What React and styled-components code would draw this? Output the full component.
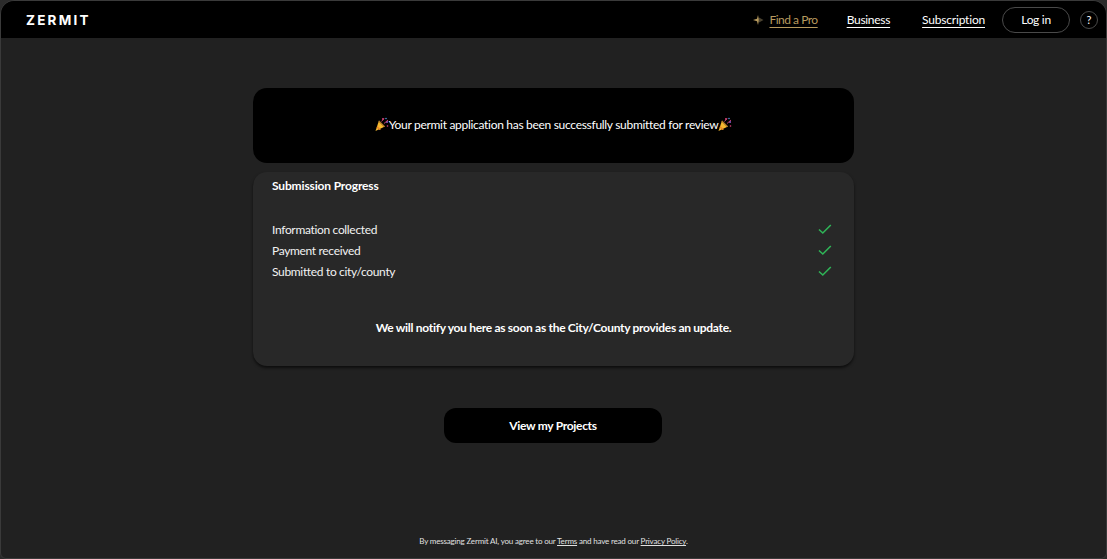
import React from 'react';
import styled, { createGlobalStyle } from 'styled-components';

const GlobalStyle = createGlobalStyle`
  html, body {
    margin: 0;
    padding: 0;
    height: 100%;
    background: #2b2b2b;
  }
  * { box-sizing: border-box; }
`;

const Page = styled.div`
  height: 559px;
  display: flex;
  flex-direction: column;
  overflow: hidden;
  background: #212121;
  border: 1px solid #3a3a3a;
  border-radius: 14px 14px 6px 6px;
  font-family: 'Lato', sans-serif;
  font-size: 12px;
  letter-spacing: -0.3px;
  color: #fff;
`;

const Header = styled.header`
  height: 37px;
  flex: none;
  display: flex;
  align-items: center;
  background: #000;
  padding: 0 8px 0 25px;
`;

const Logo = styled.div`
  font-family: 'Inter', sans-serif;
  font-weight: 700;
  font-size: 13.5px;
  letter-spacing: 2.2px;
  margin-right: auto;
`;

const ProLink = styled.a`
  display: flex;
  align-items: center;
  gap: 5px;
  margin-right: 29px;
  color: #b79a5e;
  letter-spacing: -0.5px;
  span { text-decoration: underline; text-underline-offset: 3px; }
`;

const NavLink = styled.a`
  color: #fff;
  text-decoration: underline;
  text-underline-offset: 3px;
  letter-spacing: ${(p) => p.$spacing}px;
  margin-right: ${(p) => p.$gap}px;
`;

const LoginButton = styled.button`
  width: 68px;
  height: 26px;
  border: 1px solid #4a4a4a;
  border-radius: 13px;
  background: transparent;
  color: #fff;
  font: 12px 'Lato', sans-serif;
  letter-spacing: inherit;
  padding: 0;
  margin-right: 10px;
`;

const HelpButton = styled.button`
  width: 18px;
  height: 18px;
  border: 1px solid #4a4a4a;
  border-radius: 50%;
  background: transparent;
  color: #fff;
  font: 11px 'Lato', sans-serif;
  padding: 0;
`;

const Main = styled.main`
  width: 601px;
  margin: 50px 0 0 252px;
  display: flex;
  flex-direction: column;
`;

const Banner = styled.div`
  height: 75px;
  background: #000;
  border-radius: 14px;
  display: flex;
  align-items: center;
  justify-content: center;
  padding-bottom: 3px;
  color: #fff;
`;

const ProgressCard = styled.section`
  height: 194px;
  margin-top: 9px;
  background: #282828;
  border-radius: 14px;
  box-shadow: 0 2px 3px rgba(0, 0, 0, 0.6);
  padding: 6px 19px 0;
  display: flex;
  flex-direction: column;
`;

const CardTitle = styled.h2`
  margin: 0 0 25px;
  font-size: 12px;
  line-height: 16px;
  font-weight: 700;
  letter-spacing: -0.15px;
`;

const StepRow = styled.div`
  height: 21px;
  display: flex;
  align-items: center;
  justify-content: space-between;
  padding-right: 3px;
  color: #f2f2f2;
  letter-spacing: -0.33px;
`;

const Notice = styled.p`
  margin: 38px 0 0;
  text-align: center;
  font-weight: 700;
`;

const ProjectsButton = styled.button`
  align-self: center;
  width: 218px;
  height: 35px;
  margin: 42px 1px 0 0;
  background: #000;
  border: none;
  border-radius: 12px;
  color: #fff;
  font: 700 12px 'Lato', sans-serif;
  letter-spacing: inherit;
  padding: 0 0 1px;
`;

const Footer = styled.footer`
  margin-top: auto;
  padding-bottom: 12px;
  text-align: center;
  font-size: 8px;
  letter-spacing: -0.18px;
  color: #e0e0e0;
  a { color: inherit; text-decoration: underline; }
`;

const Popper = () => (
  <svg width="14" height="15" viewBox="0 0 14 15">
    <path d="M0.5 14 L4 3.5 L10 9.5 Z" fill="#f5b82e" />
    <path d="M2.2 9 L6 12.4 L4.4 13 L1.6 10.6 Z" fill="#e8862a" />
    <path d="M4 3.5 L10 9.5 L8.8 10 L3.6 4.8 Z" fill="#a8702a" />
    <circle cx="8" cy="2" r="1" fill="#e0457b" />
    <circle cx="12" cy="5" r="1" fill="#8e5bd0" />
    <path d="M6.5 4.5 L9 1.5 M9 6.5 L13 3" stroke="#c2406e" strokeWidth="1" fill="none" />
    <circle cx="11" cy="1.5" r="0.8" fill="#4a90d9" />
    <circle cx="12.5" cy="9" r="0.8" fill="#e0457b" />
  </svg>
);

const Spark = () => (
  <svg width="11" height="12" viewBox="0 0 11 12">
    <path d="M5 1 L5.8 5 L5.8 7 L5 11 L4 7.2 L0 6 L4 4.8 Z" fill="#b79a5e" />
    <path d="M6 3.5 L10.5 6 L6 8.5 Z" fill="#4a4230" />
  </svg>
);

const Check = () => (
  <svg width="14" height="11" viewBox="0 0 14 11" fill="none">
    <path d="M1 5.5 L4.8 9 L12.8 1" stroke="#2fb457" strokeWidth="1.6" />
  </svg>
);

const steps = ['Information collected', 'Payment received', 'Submitted to city/county'];

export default function App() {
  return (
    <>
      <GlobalStyle />
      <Page>
        <Header>
          <Logo>ZERMIT</Logo>
          <ProLink>
            <Spark />
            <span>Find a Pro</span>
          </ProLink>
          <NavLink $gap={32} $spacing={-0.3}>Business</NavLink>
          <NavLink $gap={17} $spacing={-0.2}>Subscription</NavLink>
          <LoginButton>Log in</LoginButton>
          <HelpButton>?</HelpButton>
        </Header>
        <Main>
          <Banner>
            <Popper />
            Your permit application has been successfully submitted for review
            <Popper />
          </Banner>
          <ProgressCard>
            <CardTitle>Submission Progress</CardTitle>
            {steps.map((step) => (
              <StepRow key={step}>
                {step}
                <Check />
              </StepRow>
            ))}
            <Notice>We will notify you here as soon as the City/County provides an update.</Notice>
          </ProgressCard>
          <ProjectsButton>View my Projects</ProjectsButton>
        </Main>
        <Footer>
          By messaging Zermit AI, you agree to our <a>Terms</a> and have read our <a>Privacy Policy</a>.
        </Footer>
      </Page>
    </>
  );
}
